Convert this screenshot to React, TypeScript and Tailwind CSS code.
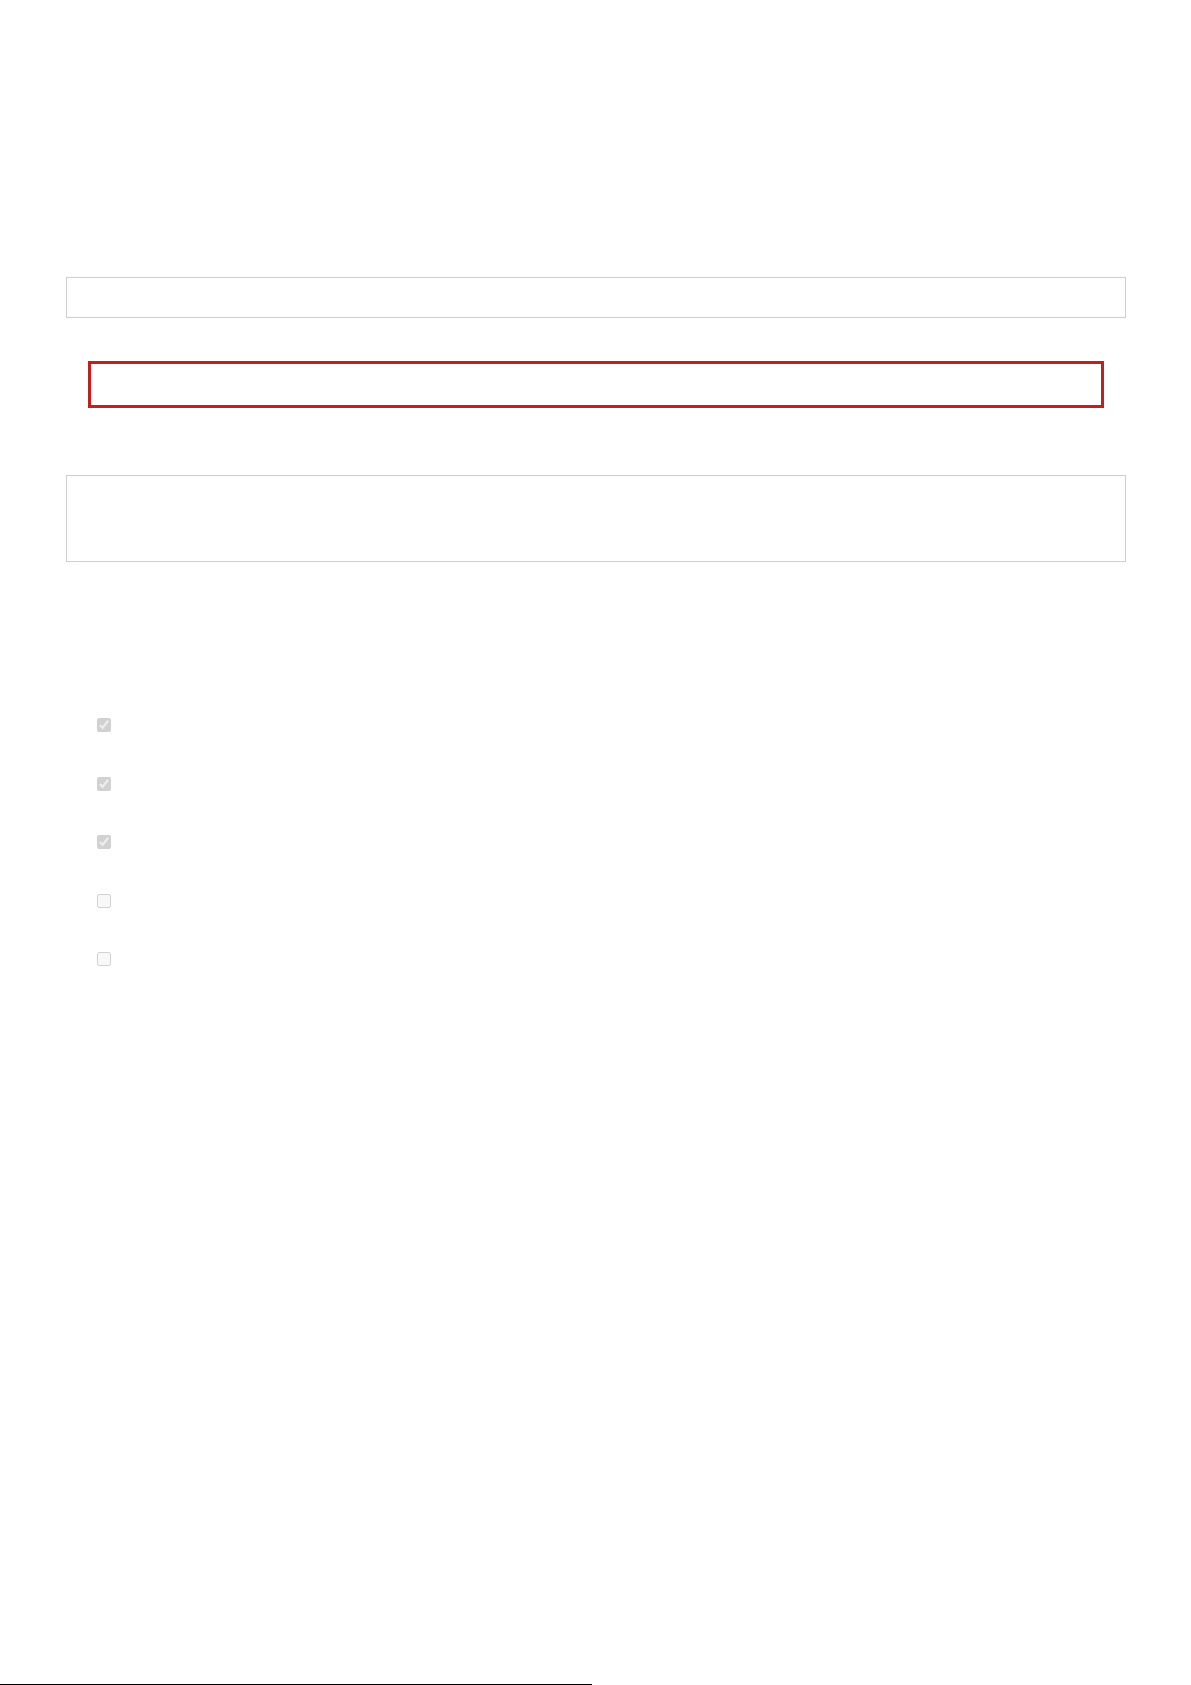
export default function App() {
  const boxes = [true, true, true, false, false];
  return (
    <div className="relative flex min-h-[1685px] w-[1191px] flex-col bg-white" style={{ fontFamily: '"Liberation Sans", Arial, sans-serif' }}>
      <div className="px-[66px] pt-[277px]">
        <div className="h-[41px] w-[1060px] border border-[#cbcfd3] bg-white" />
        <div className="ml-[22px] mt-[43px] h-[47px] w-[1016px] border-[3px] border-[#c21f1f]" />
        <div className="mt-[67px] h-[87px] w-[1060px] border border-[#cbcfd3]" />
        <div className="ml-[31px] mt-[156px] flex flex-col gap-[44.6px]">
          {boxes.map((c, i) => (
            <input
              key={i}
              type="checkbox"
              disabled
              defaultChecked={c}
              className="m-0 h-[14px] w-[14px]"
            />
          ))}
        </div>
      </div>
      <div className="mt-auto h-px w-[592px] bg-black" />
    </div>
  );
}
